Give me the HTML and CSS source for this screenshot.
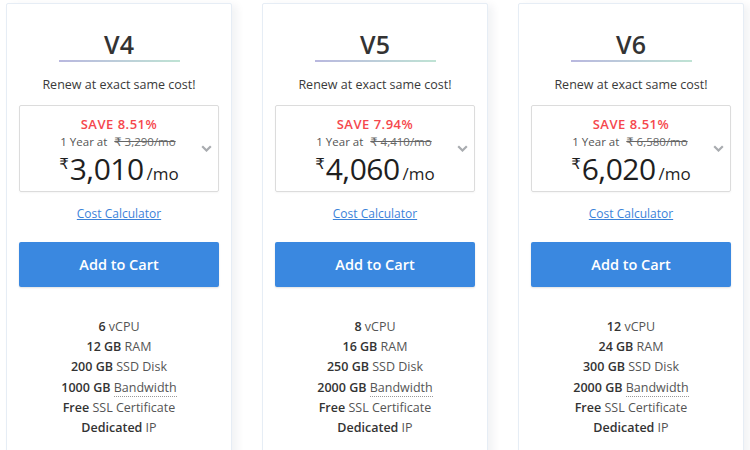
FILE: index.html
```html
<!DOCTYPE html>
<html>
<head>
<meta charset="utf-8">
<link rel="stylesheet" href="styles.css">
</head>
<body>
<div class="plans">
  <div class="card">
    <h2 class="title">V4</h2>
    <div class="rule"></div>
    <p class="renew">Renew at exact same cost!</p>
    <div class="pricebox">
      <div class="save">SAVE 8.51%</div>
      <div class="year">1 Year at <s>₹ 3,290/mo</s></div>
      <div class="price"><span class="cur">₹</span><span class="amt">3,010</span><span class="per">/mo</span></div>
      <svg class="chev" width="11" height="7" viewBox="0 0 11 7"><path d="M1.2 1.2 L5.5 5.5 L9.8 1.2" fill="none" stroke="#a9acb0" stroke-width="2.2"/></svg>
    </div>
    <a class="calc" href="#">Cost Calculator</a>
    <button class="cart">Add to Cart</button>
    <ul class="feats">
      <li><b>6</b> vCPU</li>
      <li><b>12 GB</b> RAM</li>
      <li><b>200 GB</b> SSD Disk</li>
      <li><b>1000 GB</b> <span class="dot">Bandwidth</span></li>
      <li><b>Free</b> SSL Certificate</li>
      <li><b>Dedicated</b> IP</li>
    </ul>
  </div>
  <div class="card">
    <h2 class="title">V5</h2>
    <div class="rule"></div>
    <p class="renew">Renew at exact same cost!</p>
    <div class="pricebox">
      <div class="save">SAVE 7.94%</div>
      <div class="year">1 Year at <s>₹ 4,410/mo</s></div>
      <div class="price"><span class="cur">₹</span><span class="amt">4,060</span><span class="per">/mo</span></div>
      <svg class="chev" width="11" height="7" viewBox="0 0 11 7"><path d="M1.2 1.2 L5.5 5.5 L9.8 1.2" fill="none" stroke="#a9acb0" stroke-width="2.2"/></svg>
    </div>
    <a class="calc" href="#">Cost Calculator</a>
    <button class="cart">Add to Cart</button>
    <ul class="feats">
      <li><b>8</b> vCPU</li>
      <li><b>16 GB</b> RAM</li>
      <li><b>250 GB</b> SSD Disk</li>
      <li><b>2000 GB</b> <span class="dot">Bandwidth</span></li>
      <li><b>Free</b> SSL Certificate</li>
      <li><b>Dedicated</b> IP</li>
    </ul>
  </div>
  <div class="card">
    <h2 class="title">V6</h2>
    <div class="rule"></div>
    <p class="renew">Renew at exact same cost!</p>
    <div class="pricebox">
      <div class="save">SAVE 8.51%</div>
      <div class="year">1 Year at <s>₹ 6,580/mo</s></div>
      <div class="price"><span class="cur">₹</span><span class="amt">6,020</span><span class="per">/mo</span></div>
      <svg class="chev" width="11" height="7" viewBox="0 0 11 7"><path d="M1.2 1.2 L5.5 5.5 L9.8 1.2" fill="none" stroke="#a9acb0" stroke-width="2.2"/></svg>
    </div>
    <a class="calc" href="#">Cost Calculator</a>
    <button class="cart">Add to Cart</button>
    <ul class="feats">
      <li><b>12</b> vCPU</li>
      <li><b>24 GB</b> RAM</li>
      <li><b>300 GB</b> SSD Disk</li>
      <li><b>2000 GB</b> <span class="dot">Bandwidth</span></li>
      <li><b>Free</b> SSL Certificate</li>
      <li><b>Dedicated</b> IP</li>
    </ul>
  </div>
</div>
</body>
</html>
```
FILE: styles.css
```css
html, body {
  margin: 0;
  padding: 0;
  background: #fff;
  overflow: hidden;
}
body {
  font-family: "Open Sans", "DejaVu Sans", sans-serif;
  color: #333;
}
.plans {
  display: flex;
  gap: 30px;
  padding: 3px 0 0 6px;
}
.card {
  width: 200px;
  height: 480px;
  flex: none;
  border: 1px solid #e6edf5;
  border-radius: 2px;
  padding: 0 12px;
  box-shadow: 5px 2px 8px rgba(20, 30, 60, 0.06);
  display: flex;
  flex-direction: column;
  align-items: center;
  background: #fff;
}
.title {
  margin: 25px 0 0;
  font-size: 25px;
  font-weight: 600;
  line-height: 30px;
  color: #333;
}
.rule {
  width: 121px;
  height: 2px;
  margin-top: 1px;
  background: linear-gradient(90deg, #b9b8df, #bfe3d4);
}
.renew {
  margin: 15px 0 0;
  font-size: 12.5px;
  line-height: 16px;
  color: #3a3a3a;
}
.pricebox {
  position: relative;
  align-self: stretch;
  margin-top: 12px;
  height: 85px;
  border: 1px solid #dcdcdc;
  border-radius: 2px;
  display: flex;
  flex-direction: column;
  align-items: center;
  box-shadow: 0 1px 2px rgba(0,0,0,0.04);
}
.save {
  margin-top: 10px;
  font-size: 13px;
  font-weight: 600;
  letter-spacing: 0.5px;
  line-height: 16px;
  color: #f5474d;
}
.year {
  margin-top: 3px;
  font-size: 11.5px;
  line-height: 14px;
  color: #555;
}
.year s {
  margin-left: 2px;
  padding: 0 2px;
  color: #666;
}
.price {
  display: flex;
  align-items: baseline;
  height: 40px;
  color: #1f1f1f;
}
.cur {
  align-self: flex-start;
  font-size: 15px;
  line-height: 28px;
  margin-right: 1px;
}
.amt {
  font-size: 30px;
  line-height: 40px;
  letter-spacing: -0.5px;
}
.per {
  font-size: 17px;
  margin-left: 3px;
  line-height: 20px;
}
.chev {
  position: absolute;
  right: 6px;
  top: 39px;
}
.calc {
  margin-top: 14px;
  font-size: 12px;
  line-height: 16px;
  color: #3b82d9;
  text-decoration: underline;
}
.cart {
  align-self: stretch;
  margin-top: 20px;
  height: 45px;
  border: none;
  border-radius: 2px;
  background: #3a88e0;
  color: #fff;
  font-family: inherit;
  font-size: 14.5px;
  font-weight: 600;
  box-shadow: 0 1px 2px rgba(0,0,0,0.12);
}
.feats {
  list-style: none;
  margin: 30px 0 0;
  padding: 0;
  text-align: center;
  font-size: 12.5px;
  line-height: 20.2px;
  color: #555;
}
.feats b {
  font-weight: 600;
  color: #333;
}
.dot {
  border-bottom: 1px dotted #999;
}
```
